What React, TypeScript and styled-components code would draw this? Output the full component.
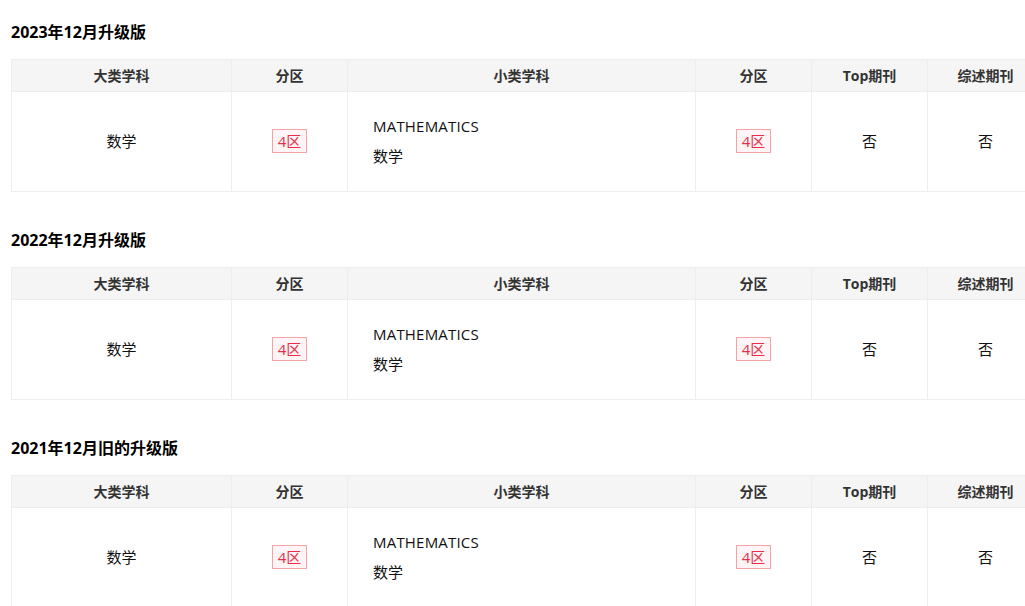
import { createGlobalStyle } from "styled-components";
import styled from "styled-components";

const GlobalStyle = createGlobalStyle`
  html, body {
    margin: 0;
    padding: 0;
    overflow: hidden;
    background: #fff;
  }
  body {
    font-family: "Open Sans", "Noto Sans CJK SC", "Noto Sans", sans-serif;
    color: #111;
  }
`;

const Page = styled.div`
  padding: 21px 0 0 11px;
  width: 1100px;
`;

const Section = styled.section`
  margin-bottom: 37px;
`;

const Title = styled.h3`
  margin: 0 0 16px;
  font-size: 16px;
  line-height: 22px;
  font-weight: 700;
  color: #000;
`;

const Table = styled.table`
  border-collapse: collapse;
  table-layout: fixed;
  width: 1026px;
`;

const Th = styled.th<{ $w: number }>`
  width: ${(p) => p.$w}px;
  height: 31px;
  padding: 0;
  background: #f5f5f5;
  border: 1px solid #eeeeee;
  font-size: 14px;
  line-height: 18px;
  font-weight: 700;
  color: #333;
  text-align: center;
`;

const Td = styled.td<{ $left?: boolean }>`
  height: 97px;
  padding: ${(p) => (p.$left ? "0 0 2px 25px" : "0 0 2px")};
  border: 1px solid #eeeeee;
  text-align: ${(p) => (p.$left ? "left" : "center")};
  vertical-align: middle;
  color: #111;
  font-size: 15px;
  line-height: 20px;
`;

const Badge = styled.span`
  display: inline-block;
  box-sizing: border-box;
  height: 24px;
  line-height: 22px;
  padding: 0 5px;
  border: 1px solid #f5a3a3;
  background: #fff5f7;
  color: #e82f45;
  font-size: 15px;
  vertical-align: middle;
`;

const SubName = styled.div`
  line-height: 30px;
  font-size: 15px;
`;

const Latin = styled.span`
  letter-spacing: 0.2px;
`;

const columns = [
  { label: "大类学科", w: 219 },
  { label: "分区", w: 115 },
  { label: "小类学科", w: 347 },
  { label: "分区", w: 115 },
  { label: "Top期刊", w: 115 },
  { label: "综述期刊", w: 115 },
];

const versions = ["2023年12月升级版", "2022年12月升级版", "2021年12月旧的升级版"];

export default function App() {
  return (
    <>
      <GlobalStyle />
      <Page>
        {versions.map((v) => (
          <Section key={v}>
            <Title>{v}</Title>
            <Table>
              <thead>
                <tr>
                  {columns.map((c, i) => (
                    <Th key={i} $w={c.w}>
                      {c.label}
                    </Th>
                  ))}
                </tr>
              </thead>
              <tbody>
                <tr>
                  <Td>数学</Td>
                  <Td>
                    <Badge>4区</Badge>
                  </Td>
                  <Td $left>
                    <SubName>
                      <Latin>MATHEMATICS</Latin>
                    </SubName>
                    <SubName>数学</SubName>
                  </Td>
                  <Td>
                    <Badge>4区</Badge>
                  </Td>
                  <Td>否</Td>
                  <Td>否</Td>
                </tr>
              </tbody>
            </Table>
          </Section>
        ))}
      </Page>
    </>
  );
}
